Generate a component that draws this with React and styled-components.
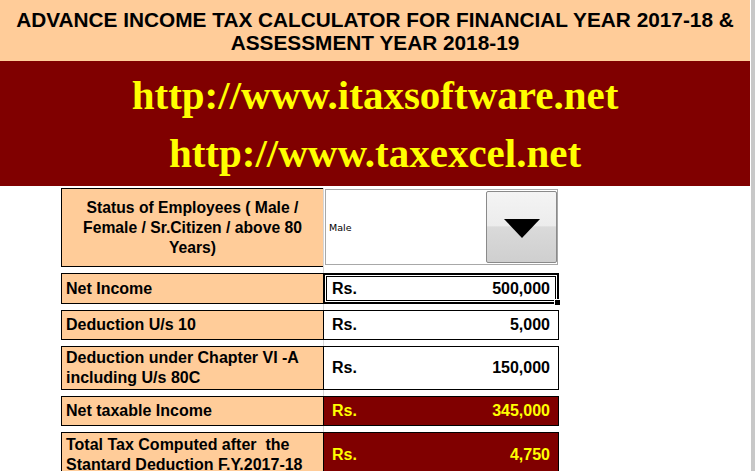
import React from 'react';
import styled, { createGlobalStyle } from 'styled-components';

const GlobalStyle = createGlobalStyle`
  html, body {
    margin: 0;
    padding: 0;
    background: #fff;
  }
  body {
    font-family: "Liberation Sans", Arial, sans-serif;
  }
`;

const Page = styled.div`
  display: flex;
  width: 755px;
  height: 471px;
  overflow: hidden;
  background: #fff;
`;

const Sheet = styled.div`
  width: 750px;
  flex-shrink: 0;
  display: flex;
  flex-direction: column;
  & > * {
    flex-shrink: 0;
  }
`;

const ScrollEdge = styled.div`
  width: 4px;
  flex-shrink: 0;
  border-left: 1px solid #fff;
  background: #c8c8c8;
`;

const Header = styled.div`
  height: 61px;
  box-sizing: border-box;
  padding-top: 8px;
  background: #ffcc99;
  color: #000;
  font-weight: bold;
  font-size: 20.8px;
  line-height: 23px;
  text-align: center;
  white-space: nowrap;
`;

const Banner = styled.div`
  height: 125px;
  background: #800000;
  display: flex;
  flex-direction: column;
  align-items: center;
  justify-content: center;
  gap: 18px;
`;

const Url = styled.div`
  font-family: "Liberation Serif", "Times New Roman", serif;
  font-weight: bold;
  font-size: 41px;
  line-height: 40px;
  color: #ffff00;
`;

const Table = styled.div`
  margin-top: 2px;
  padding-left: 61px;
  display: flex;
  flex-direction: column;
  gap: 6px;
  background-image: linear-gradient(#d6d6d6, #d6d6d6);
  background-size: 1px 100%;
  background-position: 323px 0;
  background-repeat: no-repeat;
`;

const Row = styled.div`
  display: grid;
  grid-template-columns: 262px 236px;
  height: ${(p) => p.$h}px;
  flex-shrink: 0;
`;

const Label = styled.div`
  box-sizing: border-box;
  border: 1px solid #000;
  border-right: none;
  background: #ffcc99;
  color: #000;
  font-weight: bold;
  font-size: 16px;
  line-height: 20px;
  padding: 0 4px;
  display: flex;
  align-items: center;
  justify-content: ${(p) => (p.$center ? 'center' : 'flex-start')};
  text-align: ${(p) => (p.$center ? 'center' : 'left')};
  white-space: nowrap;
`;

const StatusLabel = styled(Label)`
  font-size: 15.7px;
  padding: 0 10px;
  white-space: normal;
`;

const Value = styled.div`
  position: relative;
  box-sizing: border-box;
  border: 1px solid #000;
  background: ${(p) => (p.$dark ? '#800000' : '#fff')};
  color: ${(p) => (p.$dark ? '#ffff00' : '#000')};
  font-weight: bold;
  font-size: 16px;
  display: flex;
  align-items: center;
  justify-content: space-between;
  padding: 0 8px 0 8px;
  ${(p) =>
    p.$selected &&
    `
    border: 2px solid #000;
    box-shadow: inset 0 0 0 1px #fff, inset 0 0 0 2px #000;
    padding: 0 7px 0 7px;
  `}
`;

const Handle = styled.span`
  position: absolute;
  right: -4px;
  bottom: -4px;
  width: 5px;
  height: 5px;
  background: #000;
  border: 1px solid #fff;
`;

const DropCell = styled.div`
  display: flex;
  padding: 1px 1px 2px 2px;
`;

const Select = styled.div`
  flex: 1;
  display: flex;
  align-items: center;
  justify-content: space-between;
  border: 1px solid #a8a8a8;
  background: #fff;
`;

const SelectText = styled.span`
  font-family: "DejaVu Sans", Tahoma, sans-serif;
  font-size: 9.5px;
  padding-left: 3px;
  color: #000;
`;

const DropButton = styled.div`
  align-self: stretch;
  width: 71px;
  margin: 1px 0 1px 0;
  box-sizing: border-box;
  border: 1px solid #8a8a8a;
  border-radius: 2px;
  background: linear-gradient(#f4f4f4 0%, #ececec 48%, #dadada 50%, #cfcfcf 100%);
  display: flex;
  align-items: center;
  justify-content: center;
`;

const Triangle = styled.div`
  width: 0;
  height: 0;
  border-left: 18px solid transparent;
  border-right: 18px solid transparent;
  border-top: 19px solid #000;
  margin-top: 2px;
`;

const rows = [
  { label: 'Net Income', value: '500,000', h: 31, selected: true },
  { label: 'Deduction U/s 10', value: '5,000', h: 30 },
  { label: 'Deduction under Chapter VI -A including U/s 80C', value: '150,000', h: 44, lines: ['Deduction under Chapter VI -A', 'including U/s 80C'] },
  { label: 'Net taxable Income', value: '345,000', h: 30, dark: true },
  { label: 'Total Tax Computed after the', value: '4,750', h: 46, dark: true, lines: ['Total Tax Computed after\u00a0 the', 'Stantard Deduction F.Y.2017-18'] },
];

export default function App() {
  return (
    <>
      <GlobalStyle />
      <Page>
        <Sheet>
          <Header>
            ADVANCE INCOME TAX CALCULATOR FOR FINANCIAL YEAR 2017-18 &amp;
            <br />
            ASSESSMENT YEAR 2018-19
          </Header>
          <Banner>
            <Url>http://www.itaxsoftware.net</Url>
            <Url>http://www.taxexcel.net</Url>
          </Banner>
          <Table>
            <Row $h={79}>
              <StatusLabel $center>
                Status of Employees ( Male / Female / Sr.Citizen / above 80 Years)
              </StatusLabel>
              <DropCell>
                <Select>
                  <SelectText>Male</SelectText>
                  <DropButton>
                    <Triangle />
                  </DropButton>
                </Select>
              </DropCell>
            </Row>
            {rows.map((r) => (
              <Row key={r.label} $h={r.h}>
                <Label>
                  {r.lines ? (
                    <div>
                      {r.lines.map((l) => (
                        <div key={l}>{l}</div>
                      ))}
                    </div>
                  ) : (
                    r.label
                  )}
                </Label>
                <Value $dark={r.dark} $selected={r.selected}>
                  <span>Rs.</span>
                  <span>{r.value}</span>
                  {r.selected && <Handle />}
                </Value>
              </Row>
            ))}
          </Table>
        </Sheet>
        <ScrollEdge />
      </Page>
    </>
  );
}
